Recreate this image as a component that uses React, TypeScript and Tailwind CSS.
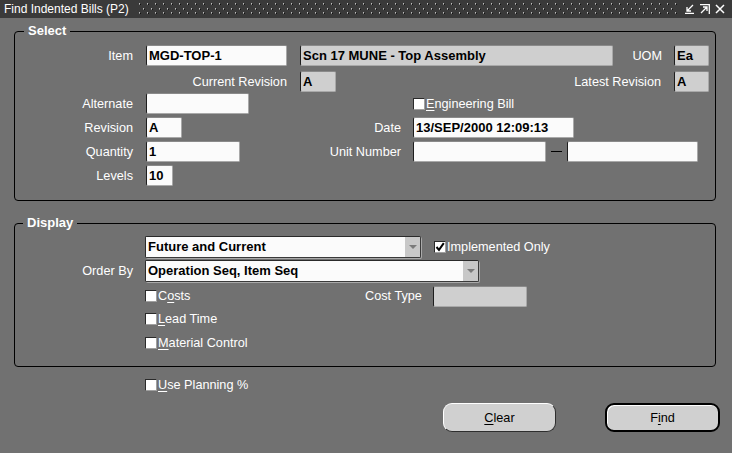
import React from "react";

const Label: React.FC<{ w: string; children: React.ReactNode }> = ({ w, children }) => (
  <span className={`${w} shrink-0 whitespace-nowrap text-right text-white`}>{children}</span>
);

const Field: React.FC<{ w: string; value?: string; gray?: boolean; className?: string }> = ({
  w,
  value,
  gray,
  className = "",
}) => (
  <div
    className={`${w} ${className} flex h-[21px] shrink-0 items-center overflow-hidden whitespace-nowrap rounded-[2px] border border-t-[#8a8a8a] border-l-[#1e1e1e] border-r-[#a9a9a9] border-b-[#a9a9a9] pl-[2px] text-[13px] font-bold text-black ${
      gray ? "bg-[#cfcfcf]" : "bg-[#fbfbfb]"
    }`}
  >
    {value}
  </div>
);

const Combo: React.FC<{ w: string; value: string; className?: string }> = ({ w, value, className = "" }) => (
  <div
    className={`${w} ${className} flex h-[22px] shrink-0 rounded-[2px] border border-t-[#2a2a2a] border-l-[#2a2a2a] border-r-[#3a3a3a] border-b-[#3a3a3a] shadow-[1px_1px_0_#a9a9a9]`}
  >
    <div className="flex flex-1 items-center bg-[#fbfbfb] pl-[2px] text-[13px] font-bold text-black">{value}</div>
    <div className="flex w-[15px] items-center justify-center bg-[#c8c8c8]">
      <svg width="8" height="5" viewBox="0 0 8 5">
        <path d="M0 0H8L4 4Z" fill="#7a7a7a" />
      </svg>
    </div>
  </div>
);

const Check: React.FC<{ checked?: boolean; className?: string; children: React.ReactNode }> = ({
  checked,
  className = "",
  children,
}) => (
  <div className={`flex items-center ${className}`}>
    <div className="relative h-[12px] w-[12px] shrink-0 border border-t-[#2a2a2a] border-l-[#2a2a2a] border-r-[#a0a0a0] border-b-[#a0a0a0] bg-white">
      {checked && (
        <svg className="absolute left-0 top-0" width="10" height="10" viewBox="0 0 10 10">
          <path d="M1.5 5L4 7.8L8.8 1.2" stroke="#000" strokeWidth="2" fill="none" />
        </svg>
      )}
    </div>
    <span className="ml-[1px] whitespace-nowrap text-white">{children}</span>
  </div>
);

const U: React.FC<{ children: React.ReactNode }> = ({ children }) => (
  <span className="underline underline-offset-2">{children}</span>
);

export default function App() {
  return (
    <div className="h-[453px] w-[732px] overflow-hidden bg-[#717171] font-['Liberation_Sans',Arial,sans-serif] text-[12.7px] leading-[14px]">
      {/* title bar */}
      <div className="flex h-[18px] items-center bg-[#3a3a3a]">
        <span className="ml-[4px] shrink-0 text-[12px] text-white">Find Indented Bills (P2)</span>
        <svg className="ml-[10px] shrink-0" width="538" height="12">
          <defs>
            <pattern id="dots" width="8" height="9" patternUnits="userSpaceOnUse">
              <rect x="0" y="0" width="1" height="1" fill="#bdbdbd" />
              <rect x="1" y="1" width="1" height="1" fill="#111" />
              <rect x="0" y="1" width="1" height="1" fill="#8a8a8a" />
              <rect x="4" y="5" width="1" height="1" fill="#bdbdbd" />
              <rect x="5" y="6" width="1" height="1" fill="#111" />
              <rect x="4" y="6" width="1" height="1" fill="#8a8a8a" />
            </pattern>
          </defs>
          <rect width="538" height="12" fill="url(#dots)" />
        </svg>
        <div className="ml-[8px] flex items-center gap-[5px]">
          <svg width="10" height="10" viewBox="0 0 10 10" fill="none" stroke="#fff" strokeWidth="1.3">
            <path d="M8 1L2 7M2 3V7H6M0 9.5H9" />
          </svg>
          <svg width="10" height="10" viewBox="0 0 10 10" fill="none" stroke="#fff" strokeWidth="1.3">
            <path d="M0 0.7H9.3V10M1 9L7 3M3 3H7V7" />
          </svg>
          <svg width="10" height="10" viewBox="0 0 10 10" fill="none" stroke="#fff" strokeWidth="1.5">
            <path d="M1 1L9 9M9 1L1 9" />
          </svg>
        </div>
      </div>

      {/* Select */}
      <fieldset className="ml-[14px] mt-[6px] w-[702px] rounded-[4px] border border-black pb-[14px]">
        <legend className="ml-[9px] px-[4px] text-[13px] font-bold leading-[14px] text-white">Select</legend>
        <div className="mt-[7px] flex h-[21px] items-center">
          <Label w="w-[118px]">Item</Label>
          <Field w="w-[141px]" className="ml-[13px]" value="MGD-TOP-1" />
          <Field w="w-[313px]" className="ml-[13px]" value="Scn 17 MUNE - Top Assembly" gray />
          <Label w="w-[49px]">UOM</Label>
          <Field w="w-[35px]" className="ml-[12px]" value="Ea" gray />
        </div>
        <div className="mt-[5px] flex h-[21px] items-center">
          <Label w="w-[272px]">Current Revision</Label>
          <Field w="w-[36px]" className="ml-[13px]" value="A" gray />
          <Label w="w-[325px]">Latest Revision</Label>
          <Field w="w-[35px]" className="ml-[13px]" value="A" gray />
        </div>
        <div className="mt-[1px] flex h-[21px] items-center">
          <Label w="w-[118px]">Alternate</Label>
          <Field w="w-[103px]" className="ml-[13px]" />
          <Check className="ml-[164px]">
            <U>E</U>ngineering Bill
          </Check>
        </div>
        <div className="mt-[3px] flex h-[21px] items-center">
          <Label w="w-[118px]">Revision</Label>
          <Field w="w-[36px]" className="ml-[13px]" value="A" />
          <Label w="w-[219px]">Date</Label>
          <Field w="w-[161px]" className="ml-[12px]" value="13/SEP/2000 12:09:13" />
        </div>
        <div className="mt-[3px] flex h-[21px] items-center">
          <Label w="w-[118px]">Quantity</Label>
          <Field w="w-[94px]" className="ml-[13px]" value="1" />
          <Label w="w-[161px]">Unit Number</Label>
          <Field w="w-[133px]" className="ml-[12px]" />
          <div className="ml-[5px] h-[1px] w-[11px] shrink-0 bg-black" />
          <Field w="w-[131px]" className="ml-[5px]" />
        </div>
        <div className="mt-[3px] flex h-[21px] items-center">
          <Label w="w-[118px]">Levels</Label>
          <Field w="w-[27px]" className="ml-[13px]" value="10" />
        </div>
      </fieldset>

      {/* Display */}
      <fieldset className="ml-[14px] mt-[15px] w-[702px] rounded-[4px] border border-black pb-[11px]">
        <legend className="ml-[8px] px-[4px] text-[13px] font-bold leading-[14px] text-white">Display</legend>
        <div className="mt-[6px] flex h-[22px] items-center">
          <Combo w="w-[276px]" className="ml-[130px]" value="Future and Current" />
          <Check className="ml-[13px]" checked>
            Implemented Only
          </Check>
        </div>
        <div className="mt-[2px] flex h-[22px] items-center">
          <Label w="w-[118px]">Order By</Label>
          <Combo w="w-[334px]" className="ml-[12px]" value="Operation Seq, Item Seq" />
        </div>
        <div className="mt-[3px] flex h-[22px] items-center">
          <div className="ml-[130px] w-[220px] shrink-0">
            <Check>
              C<U>o</U>sts
            </Check>
          </div>
          <Label w="w-[55px]">Cost Type</Label>
          <Field w="w-[94px]" className="ml-[13px]" gray />
        </div>
        <div className="flex h-[24px] items-center">
          <Check className="ml-[130px]">
            <U>L</U>ead Time
          </Check>
        </div>
        <div className="flex h-[24px] items-center">
          <Check className="ml-[130px]">
            <U>M</U>aterial Control
          </Check>
        </div>
      </fieldset>

      <div className="mt-[8px] flex h-[20px] items-center">
        <Check className="ml-[145px]">
          <U>U</U>se Planning %
        </Check>
      </div>

      <div className="mt-[8px] flex">
        <button className="ml-[443px] h-[29px] w-[113px] rounded-[9px] border border-t-white border-l-white border-r-[#2e2e2e] border-b-[#2e2e2e] bg-[#d0d0d0] text-black">
          <U>C</U>lear
        </button>
        <button className="ml-[49px] h-[29px] w-[115px] rounded-[9px] border-2 border-black bg-[#d0d0d0] text-black shadow-[inset_1px_1px_0_#fff]">
          F<U>i</U>nd
        </button>
      </div>
    </div>
  );
}
